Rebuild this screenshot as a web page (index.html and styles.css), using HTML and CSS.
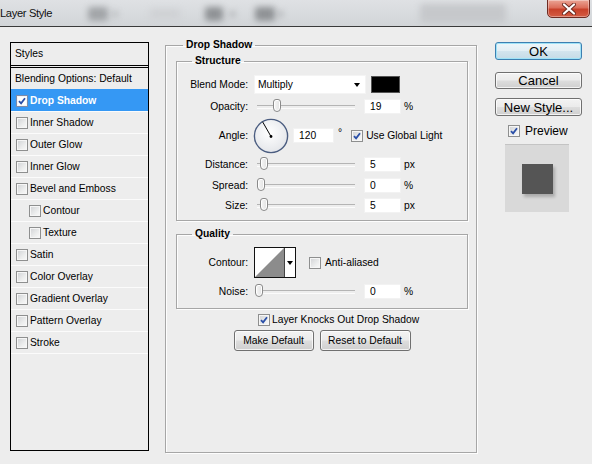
FILE: index.html
```html
<!DOCTYPE html>
<html>
<head>
<meta charset="utf-8">
<title>Layer Style</title>
<link rel="stylesheet" href="styles.css">
</head>
<body>
<div class="titlebar">
  <span class="title">Layer Style</span>
  <div class="blob b1"></div>
  <div class="blob b2"></div>
  <div class="blob b3"></div>
  <div class="blob b4"></div>
  <div class="blob b5"></div>
  <div class="blob b6"></div>
  <div class="blob b7"></div>
  <div class="blob b8"></div>
  <div class="close">
    <svg width="14" height="12" viewBox="0 0 14 12"><path d="M2 1.5 L12 10.5 M12 1.5 L2 10.5" stroke="#6b2a20" stroke-width="4" stroke-linecap="round"/><path d="M2 1.5 L12 10.5 M12 1.5 L2 10.5" stroke="#fff" stroke-width="2.2" stroke-linecap="round"/></svg>
  </div>
</div>

<div class="content">
  <div class="styles">
    <div class="list-head">Styles</div>
    <div class="row first">Blending Options: Default</div>
    <div class="row sel"><span class="cb"><svg viewBox="0 0 8 8"><path d="M1 4.2 L3.1 6.4 L7 1.2" fill="none" stroke="#2a4fa8" stroke-width="1.8"/></svg></span>Drop Shadow</div>
    <div class="row"><span class="cb"></span>Inner Shadow</div>
    <div class="row"><span class="cb"></span>Outer Glow</div>
    <div class="row"><span class="cb"></span>Inner Glow</div>
    <div class="row"><span class="cb"></span>Bevel and Emboss</div>
    <div class="row sub"><span class="cb"></span>Contour</div>
    <div class="row sub"><span class="cb"></span>Texture</div>
    <div class="row"><span class="cb"></span>Satin</div>
    <div class="row"><span class="cb"></span>Color Overlay</div>
    <div class="row"><span class="cb"></span>Gradient Overlay</div>
    <div class="row"><span class="cb"></span>Pattern Overlay</div>
    <div class="row last"><span class="cb"></span>Stroke</div>
  </div>

  <fieldset class="group main">
    <legend>Drop Shadow</legend>

    <fieldset class="group sub-group structure">
      <legend>Structure</legend>
      <div class="frow r-blend">
        <span class="lbl">Blend Mode:</span>
        <div class="select"><span>Multiply</span><span class="arrow"></span></div>
        <div class="swatch"></div>
      </div>
      <div class="frow r-slider r-opacity">
        <span class="lbl">Opacity:</span>
        <div class="slider"><div class="thumb" style="left:19px"></div></div>
        <div class="num">19</div>
        <span class="unit">%</span>
      </div>
      <div class="frow r-angle">
        <span class="lbl">Angle:</span>
        <svg class="dial" width="36" height="36" viewBox="0 0 36 36">
          <defs>
            <radialGradient id="dg" cx="0.45" cy="0.4" r="0.6">
              <stop offset="0" stop-color="#ffffff"/>
              <stop offset="1" stop-color="#e4e6ea"/>
            </radialGradient>
          </defs>
          <circle cx="18" cy="18" r="16.6" fill="url(#dg)" stroke="#4b5d80" stroke-width="1.4"/>
          <line x1="18" y1="18.5" x2="9.6" y2="3.8" stroke="#000" stroke-width="1"/>
          <circle cx="18" cy="18.5" r="1.4" fill="#000"/>
        </svg>
        <div class="num angle-num">120</div>
        <span class="deg">°</span>
        <span class="cb gl"><svg viewBox="0 0 8 8"><path d="M1 4.2 L3.1 6.4 L7 1.2" fill="none" stroke="#2a4fa8" stroke-width="1.8"/></svg></span>
        <span class="cbtext">Use Global Light</span>
      </div>
      <div class="frow r-slider r-distance">
        <span class="lbl">Distance:</span>
        <div class="slider"><div class="thumb" style="left:6px"></div></div>
        <div class="num">5</div>
        <span class="unit">px</span>
      </div>
      <div class="frow r-slider r-spread">
        <span class="lbl">Spread:</span>
        <div class="slider"><div class="thumb" style="left:3px"></div></div>
        <div class="num">0</div>
        <span class="unit">%</span>
      </div>
      <div class="frow r-slider r-size">
        <span class="lbl">Size:</span>
        <div class="slider"><div class="thumb" style="left:6px"></div></div>
        <div class="num">5</div>
        <span class="unit">px</span>
      </div>
    </fieldset>

    <fieldset class="group sub-group quality">
      <legend>Quality</legend>
      <div class="frow r-contour">
        <span class="lbl">Contour:</span>
        <div class="contour">
          <svg class="curve" width="29" height="29" viewBox="0 0 29 29"><polygon points="0,29 29,0 29,29" fill="#8c8c8c"/></svg>
          <div class="carrow"><span class="arrow"></span></div>
        </div>
        <span class="cb aa"></span>
        <span class="cbtext">Anti-aliased</span>
      </div>
      <div class="frow r-slider r-noise">
        <span class="lbl">Noise:</span>
        <div class="slider"><div class="thumb" style="left:1px"></div></div>
        <div class="num">0</div>
        <span class="unit">%</span>
      </div>
    </fieldset>

    <div class="knock">
      <span class="cb"><svg viewBox="0 0 8 8"><path d="M1 4.2 L3.1 6.4 L7 1.2" fill="none" stroke="#2a4fa8" stroke-width="1.8"/></svg></span>
      <span class="cbtext">Layer Knocks Out Drop Shadow</span>
    </div>

    <div class="btnrow">
      <button class="btn small w-make">Make Default</button>
      <button class="btn small w-reset">Reset to Default</button>
    </div>
  </fieldset>

  <div class="side">
    <button class="btn big default">OK</button>
    <button class="btn big cancel">Cancel</button>
    <button class="btn big newstyle">New Style...</button>
    <div class="preview-row">
      <span class="cb"><svg viewBox="0 0 8 8"><path d="M1 4.2 L3.1 6.4 L7 1.2" fill="none" stroke="#2a4fa8" stroke-width="1.8"/></svg></span>
      <span class="preview-label">Preview</span>
    </div>
    <div class="preview-box"><div class="preview-square"></div></div>
  </div>
</div>
</body>
</html>
```

FILE: styles.css
```css
* { box-sizing: border-box; }
html, body { margin: 0; padding: 0; }
body {
  width: 592px;
  height: 464px;
  overflow: hidden;
  background: #ededed;
  font-family: "Liberation Sans", Arial, sans-serif;
  font-size: 10.3px;
  color: #000;
}

/* ---------- title bar ---------- */
.titlebar {
  position: relative;
  height: 27px;
  background: linear-gradient(#dfe1e4, #d2d5d8);
  border-bottom: 1px solid #3a3a3a;
  overflow: hidden;
  display: flex;
  align-items: center;
}
.title {
  position: relative;
  z-index: 2;
  font-size: 11.2px;
  letter-spacing: -0.35px;
  margin-left: 0;
  color: #111;
}
.blob {
  position: absolute;
  filter: blur(3px);
  border-radius: 3px;
}
.b1 { left: 88px; top: 7px; width: 20px; height: 14px; background: #a2a5a8; }
.b2 { left: 112px; top: 11px; width: 6px; height: 6px; background: #b3b5b8; }
.b3 { left: 150px; top: 9px; width: 30px; height: 10px; background: #cfd1d4; }
.b4 { left: 205px; top: 7px; width: 18px; height: 14px; background: #8f9295; }
.b5 { left: 255px; top: 7px; width: 20px; height: 14px; background: #8f9295; }
.b6 { left: 230px; top: 11px; width: 5px; height: 6px; background: #a8aaad; }
.b7 { left: 420px; top: 4px; width: 86px; height: 19px; background: #c6c8cb; }
.b8 { left: 278px; top: 11px; width: 5px; height: 6px; background: #a8aaad; }
.close {
  position: absolute;
  z-index: 3;
  left: 547px;
  top: -1px;
  width: 43px;
  height: 19px;
  border: 1px solid #6e2b22;
  border-radius: 0 0 5px 5px;
  background: linear-gradient(#eba595 0%, #dc6e5a 45%, #c8412a 55%, #d45c44 100%);
  box-shadow: inset 0 0 0 1px rgba(255, 255, 255, 0.35);
  display: flex;
  align-items: center;
  justify-content: center;
}

/* ---------- layout ---------- */
.content {
  display: flex;
  align-items: flex-start;
  padding: 12px 0 0 10px;
}

/* ---------- styles list ---------- */
.styles {
  width: 139px;
  height: 409px;
  margin-top: 3px;
  border: 1px solid #000;
  background: #ededed;
}
.list-head {
  height: 25px;
  border-bottom: 3px double #000;
  padding-left: 4px;
  line-height: 22px;
}
.row {
  height: 22px;
  border-top: 1px solid #fbfbfb;
  display: flex;
  align-items: center;
  padding-left: 5px;
  white-space: nowrap;
}
.row.first { height: 21px; border-top: none; padding-left: 4px; }
.row.last { border-bottom: 1px solid #fbfbfb; height: 23px; }
.row.sub { padding-left: 18px; }
.row.sel {
  background: #3598f4;
  border-top-color: #3598f4;
  color: #fff;
  font-weight: bold;
}
.row .cb { margin-right: 2px; }

/* ---------- checkbox ---------- */
.cb {
  width: 12px;
  height: 12px;
  flex: none;
  border: 1px solid #8e8f8f;
  padding: 1px;
  background: linear-gradient(135deg, #cfd1d4 0%, #eceded 60%, #fafafa 100%);
  box-shadow: inset 0 0 0 1px #f6f6f6;
  display: inline-flex;
  align-items: center;
  justify-content: center;
}
.cb svg { width: 8px; height: 8px; display: block; }
.row.sel .cb { background: #fff; border-color: #7d8aa8; }
.cbtext { white-space: nowrap; }

/* ---------- group boxes ---------- */
.group {
  margin: 0;
  border: 1px solid #a6a6a6;
  box-shadow: inset 1px 1px 0 #fdfdfd, 1px 1px 0 #fdfdfd;
  min-width: 0;
}
.group > legend {
  font-weight: bold;
  font-size: 10.3px;
  line-height: 12px;
  padding: 0 3px;
}
.main {
  width: 312px;
  height: 414px;
  margin-left: 16px;
  padding: 4px 8px 0 10px;
}
.main > legend { margin-left: 7px; }
.sub-group {
  width: 292px;
  padding: 8px 0 0 0;
}
.sub-group > legend { margin-left: 15px; }
.structure { height: 166px; }
.quality { height: 81px; margin-top: 7px; padding-top: 7px; }

/* ---------- form rows ---------- */
.frow {
  display: flex;
  align-items: center;
  white-space: nowrap;
}
.lbl {
  width: 71px;
  flex: none;
  text-align: right;
  margin-right: 6px;
}
.r-blend { height: 19px; }
.r-opacity { height: 16px; margin-top: 4px; }
.r-angle { height: 35px; margin-top: 4px; }
.r-distance { height: 16px; margin-top: 3px; }
.r-spread { height: 16px; margin-top: 5px; }
.r-size { height: 16px; margin-top: 4px; }
.r-contour { height: 31px; }
.r-noise { height: 16px; margin-top: 5px; }

.select {
  width: 112px;
  height: 19px;
  background: #fff;
  border: 1px solid #f4f4f4;
  display: flex;
  align-items: center;
  justify-content: space-between;
  padding: 0 5px 0 3px;
}
.arrow {
  width: 0;
  height: 0;
  border-left: 3.5px solid transparent;
  border-right: 3.5px solid transparent;
  border-top: 4px solid #000;
}
.swatch {
  width: 29px;
  height: 17px;
  margin-left: 5px;
  background: #000;
  border: 1px solid #555;
}

.slider {
  position: relative;
  width: 104px;
  height: 16px;
  flex: none;
}
.slider::before {
  content: "";
  position: absolute;
  left: 3px;
  right: 3px;
  top: 7px;
  height: 2px;
  border-top: 1px solid #b4b4b4;
  border-bottom: 1px solid #fbfbfb;
}
.thumb {
  position: absolute;
  top: 1px;
  width: 8px;
  height: 13px;
  border: 1px solid #8a8a8a;
  border-radius: 3px 3px 4px 4px;
  background: linear-gradient(90deg, #f7f7f7, #e2e2e2);
  box-shadow: inset 0 0 0 1px #fff;
}
.num {
  width: 37px;
  height: 15px;
  margin-left: 6px;
  background: #fff;
  border: 1px solid #f2f2f2;
  padding-left: 5px;
  line-height: 14px;
  flex: none;
}
.unit { margin-left: 3px; }

.dial { margin-left: -1px; flex: none; }
.angle-num { width: 41px; margin-left: 4px; }
.deg { margin-left: 4px; margin-top: -6px; }
.cb.gl { margin-left: 9px; margin-right: 3px; }

.contour {
  width: 42px;
  height: 31px;
  border: 1px solid #111;
  background: #fff;
  display: flex;
}
.curve { display: block; }
.carrow {
  flex: 1;
  border-left: 1px solid #444;
  display: flex;
  align-items: center;
  justify-content: center;
}
.cb.aa { margin-left: 13px; margin-right: 4px; }

.knock {
  display: flex;
  align-items: center;
  height: 15px;
  margin-top: 3px;
  padding-left: 82px;
}
.knock .cb { margin-right: 2px; }

.btnrow {
  display: flex;
  justify-content: center;
  gap: 6px;
  margin-top: 3px;
}

/* ---------- buttons ---------- */
.btn {
  font-family: "Liberation Sans", Arial, sans-serif;
  color: #000;
  border: 1px solid #707070;
  border-radius: 3px;
  background: linear-gradient(#f3f3f3 0%, #ebebeb 48%, #dddddd 52%, #cfcfcf 100%);
  box-shadow: inset 0 0 0 1px rgba(255, 255, 255, 0.75);
  padding: 0;
  display: flex;
  align-items: center;
  justify-content: center;
  white-space: nowrap;
}
.btn.small { height: 21px; font-size: 10.3px; }
.w-make { width: 80px; }
.w-reset { width: 91px; }

.side {
  width: 87px;
  margin-left: 18px;
  margin-top: 3px;
  display: flex;
  flex-direction: column;
}
.btn.big { width: 87px; font-size: 13px; }
.btn.default {
  height: 18px;
  border-color: #3c7fb1;
  box-shadow: inset 0 0 0 1px #9fe2f7;
  background: linear-gradient(#eef6fa 0%, #e2eef4 48%, #d2e4ee 52%, #c6dbe6 100%);
}
.btn.cancel { height: 17px; margin-top: 12px; }
.btn.newstyle { height: 18px; margin-top: 9px; }

.preview-row {
  display: flex;
  align-items: center;
  height: 15px;
  margin-top: 7px;
  padding-left: 13px;
}
.preview-label { margin-left: 5px; font-size: 12px; }
.preview-box {
  width: 64px;
  height: 68px;
  margin-top: 6px;
  margin-left: 10px;
  background: #d9d9d9;
  border-top: 1px solid #c4c4c4;
  display: flex;
  align-items: center;
  justify-content: center;
}
.preview-square {
  width: 31px;
  height: 30px;
  background: #555555;
  box-shadow: 2px 3px 3px rgba(0, 0, 0, 0.22);
}
```
